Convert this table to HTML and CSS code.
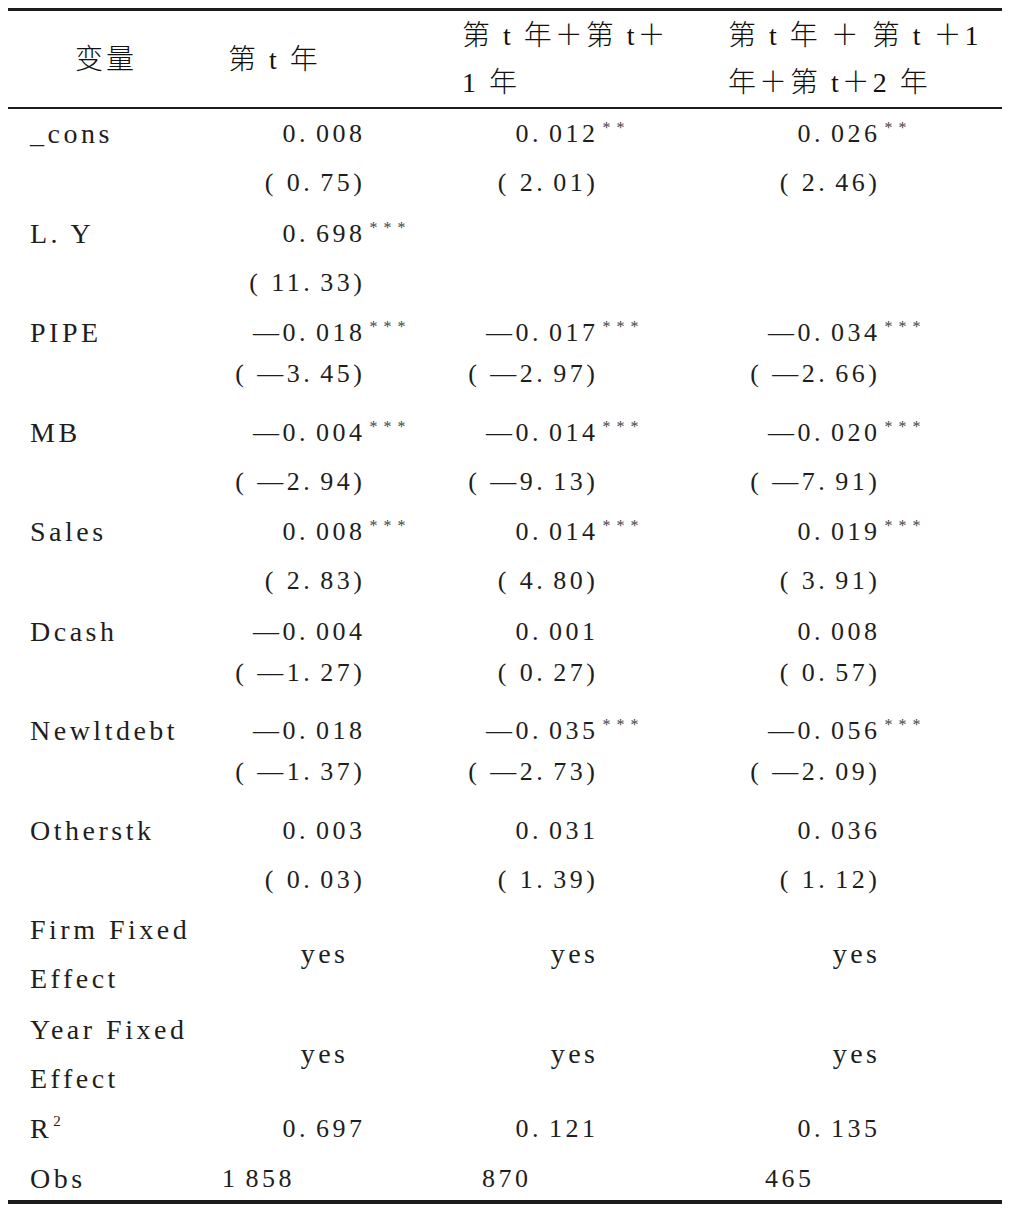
FILE: index.html
```html
<!DOCTYPE html>
<html lang="en">
<head>
<meta charset="utf-8">
<link rel="stylesheet" href="styles.css">
</head>
<body>
<div class="tbl">
  <div class="thead">
    <div class="hc h1">变量</div>
    <div class="hc h2">第 t 年</div>
    <div class="hc h3"><div>第 t 年＋第 t＋</div><div>1 年</div></div>
    <div class="hc h4"><div>第 t 年 ＋ 第 t ＋1</div><div>年＋第 t＋2 年</div></div>
  </div>

  <div class="row">
    <div class="lab"><div class="ln">_cons</div></div>
    <div class="num c2"><div class="ln">0. 008</div><div class="ln"><span class="p">(</span>0. 75)</div></div>
    <div class="num c3"><div class="ln">0. 012<sup class="st">**</sup></div><div class="ln"><span class="p">(</span>2. 01)</div></div>
    <div class="num c4"><div class="ln">0. 026<sup class="st">**</sup></div><div class="ln"><span class="p">(</span>2. 46)</div></div>
  </div>

  <div class="row">
    <div class="lab"><div class="ln">L. Y</div></div>
    <div class="num c2"><div class="ln">0. 698<sup class="st">***</sup></div><div class="ln"><span class="p">(</span>11. 33)</div></div>
    <div class="num c3"></div>
    <div class="num c4"></div>
  </div>

  <div class="row tight">
    <div class="lab"><div class="ln">PIPE</div></div>
    <div class="num c2"><div class="ln">—0. 018<sup class="st">***</sup></div><div class="ln"><span class="p">(</span>—3. 45)</div></div>
    <div class="num c3"><div class="ln">—0. 017<sup class="st">***</sup></div><div class="ln"><span class="p">(</span>—2. 97)</div></div>
    <div class="num c4"><div class="ln">—0. 034<sup class="st">***</sup></div><div class="ln"><span class="p">(</span>—2. 66)</div></div>
  </div>

  <div class="row">
    <div class="lab"><div class="ln">MB</div></div>
    <div class="num c2"><div class="ln">—0. 004<sup class="st">***</sup></div><div class="ln"><span class="p">(</span>—2. 94)</div></div>
    <div class="num c3"><div class="ln">—0. 014<sup class="st">***</sup></div><div class="ln"><span class="p">(</span>—9. 13)</div></div>
    <div class="num c4"><div class="ln">—0. 020<sup class="st">***</sup></div><div class="ln"><span class="p">(</span>—7. 91)</div></div>
  </div>

  <div class="row">
    <div class="lab"><div class="ln">Sales</div></div>
    <div class="num c2"><div class="ln">0. 008<sup class="st">***</sup></div><div class="ln"><span class="p">(</span>2. 83)</div></div>
    <div class="num c3"><div class="ln">0. 014<sup class="st">***</sup></div><div class="ln"><span class="p">(</span>4. 80)</div></div>
    <div class="num c4"><div class="ln">0. 019<sup class="st">***</sup></div><div class="ln"><span class="p">(</span>3. 91)</div></div>
  </div>

  <div class="row tight">
    <div class="lab"><div class="ln">Dcash</div></div>
    <div class="num c2"><div class="ln">—0. 004</div><div class="ln"><span class="p">(</span>—1. 27)</div></div>
    <div class="num c3"><div class="ln">0. 001</div><div class="ln"><span class="p">(</span>0. 27)</div></div>
    <div class="num c4"><div class="ln">0. 008</div><div class="ln"><span class="p">(</span>0. 57)</div></div>
  </div>

  <div class="row tight">
    <div class="lab"><div class="ln">Newltdebt</div></div>
    <div class="num c2"><div class="ln">—0. 018</div><div class="ln"><span class="p">(</span>—1. 37)</div></div>
    <div class="num c3"><div class="ln">—0. 035<sup class="st">***</sup></div><div class="ln"><span class="p">(</span>—2. 73)</div></div>
    <div class="num c4"><div class="ln">—0. 056<sup class="st">***</sup></div><div class="ln"><span class="p">(</span>—2. 09)</div></div>
  </div>

  <div class="row">
    <div class="lab"><div class="ln">Otherstk</div></div>
    <div class="num c2"><div class="ln">0. 003</div><div class="ln"><span class="p">(</span>0. 03)</div></div>
    <div class="num c3"><div class="ln">0. 031</div><div class="ln"><span class="p">(</span>1. 39)</div></div>
    <div class="num c4"><div class="ln">0. 036</div><div class="ln"><span class="p">(</span>1. 12)</div></div>
  </div>

  <div class="row">
    <div class="lab"><div class="ln">Firm Fixed</div><div class="ln">Effect</div></div>
    <div class="yes c2y">yes</div>
    <div class="yes c3">yes</div>
    <div class="yes c4">yes</div>
  </div>

  <div class="row">
    <div class="lab"><div class="ln">Year Fixed</div><div class="ln">Effect</div></div>
    <div class="yes c2y">yes</div>
    <div class="yes c3">yes</div>
    <div class="yes c4">yes</div>
  </div>

  <div class="row single">
    <div class="lab"><div class="ln">R<sup class="sq">2</sup></div></div>
    <div class="num c2"><div class="ln">0. 697</div></div>
    <div class="num c3"><div class="ln">0. 121</div></div>
    <div class="num c4"><div class="ln">0. 135</div></div>
  </div>

  <div class="row single last">
    <div class="lab"><div class="ln">Obs</div></div>
    <div class="obs o2"><div class="ln">1 858</div></div>
    <div class="obs o3"><div class="ln">870</div></div>
    <div class="obs o4"><div class="ln">465</div></div>
  </div>
</div>
</body>
</html>
```

FILE: styles.css
```css
html,
body {
  margin: 0;
  padding: 0;
  background: #ffffff;
}

.tbl {
  margin: 8px 0 0 8px;
  width: 994px;
  color: #1e1e1e;
  font-family: "Liberation Serif", serif;
  border-top: 3px solid #1c1c1c;
  border-bottom: 4px solid #1c1c1c;
}

.thead,
.row {
  display: grid;
  grid-template-columns: 202px 240px 266px 286px;
}

/* ---------- header ---------- */
.thead {
  height: 96px;
  border-bottom: 2px solid #1c1c1c;
  align-items: center;
}

.hc {
  font-family: "Liberation Serif", "Noto Sans CJK SC", sans-serif;
  font-size: 28px;
  font-weight: 300;
  color: #111111;
  line-height: 47px;
  letter-spacing: 3px;
  white-space: nowrap;
}

.h1 { padding-left: 67px; }
.h2 { padding-left: 18px; }
.h3 { padding-left: 12px; }
.h4 { padding-left: 12px; }

/* ---------- body rows ---------- */
.row {
  height: 99.5px;
}

.row.single {
  height: 49.5px;
}

.row.last {
  height: 46px;
}

.ln {
  height: 49px;
  line-height: 49px;
  white-space: nowrap;
}

.tight .ln + .ln {
  margin-top: -8px;
}

.lab {
  padding-left: 22px;
  font-size: 28px;
  letter-spacing: 3.5px;
}

.num,
.obs {
  font-size: 26px;
  letter-spacing: 3.5px;
  word-spacing: -3px;
}

.num {
  text-align: right;
}

.c2 { padding-right: 84.5px; }
.c3 { padding-right: 117.5px; }
.c4 { padding-right: 121.5px; }

.p {
  margin-right: 10px;
}

.st {
  display: inline-block;
  width: 0;
  font-size: 16px;
  line-height: 1;
  letter-spacing: 6px;
  vertical-align: 9px;
  text-indent: 4px;
  white-space: nowrap;
  color: #444444;
}

.sq {
  font-size: 15px;
  line-height: 1;
  vertical-align: 12px;
  letter-spacing: 0;
  margin-left: 1px;
}

/* yes cells: centred over the two label lines */
.yes {
  height: 98px;
  display: flex;
  align-items: center;
  justify-content: flex-end;
  font-size: 28px;
  letter-spacing: 3.5px;
}

.c2y { padding-right: 101.5px; }

/* observation counts, left aligned */
.o2 { padding-left: 12px; }
.o3 { padding-left: 32px; }
.o4 { padding-left: 49px; }
```
